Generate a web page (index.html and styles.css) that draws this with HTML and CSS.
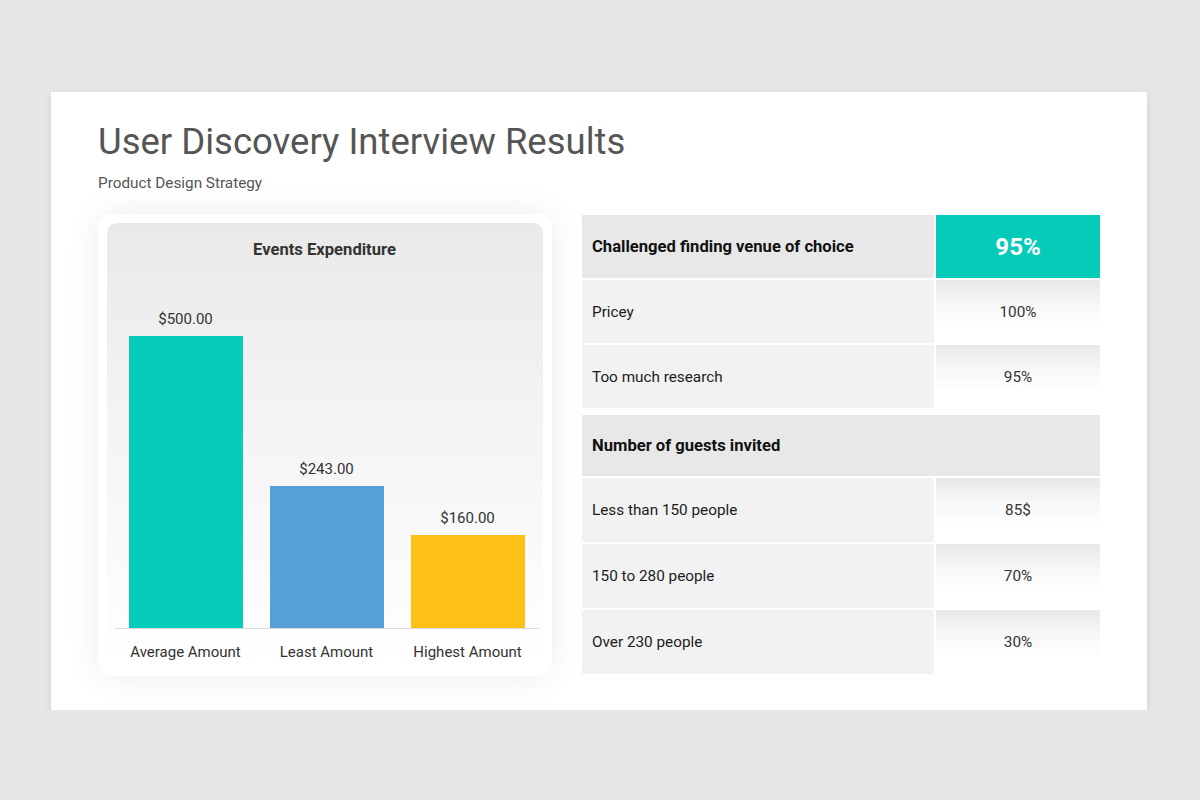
FILE: index.html
```html
<!DOCTYPE html>
<html lang="en">
<head>
<meta charset="utf-8">
<title>User Discovery Interview Results</title>
<link rel="stylesheet" href="styles.css">
</head>
<body>
<div class="slide">
  <h1 class="title">User Discovery Interview Results</h1>
  <p class="subtitle">Product Design Strategy</p>
  <div class="content">
    <div class="card">
      <div class="panel">
        <div class="chart-title">Events Expenditure</div>
        <div class="plot">
          <div class="col">
            <div class="val">$500.00</div>
            <div class="bar teal" style="height:292px"></div>
          </div>
          <div class="col">
            <div class="val">$243.00</div>
            <div class="bar blue" style="height:142px"></div>
          </div>
          <div class="col">
            <div class="val">$160.00</div>
            <div class="bar yellow" style="height:93px"></div>
          </div>
        </div>
        <div class="cats">
          <div class="cat">Average Amount</div>
          <div class="cat">Least Amount</div>
          <div class="cat">Highest Amount</div>
        </div>
      </div>
    </div>
    <div class="table">
      <div class="group">
        <div class="row">
          <div class="cell head">Challenged finding venue of choice</div>
          <div class="cell big">95%</div>
        </div>
        <div class="row">
          <div class="cell label">Pricey</div>
          <div class="cell num">100%</div>
        </div>
        <div class="row">
          <div class="cell label">Too much research</div>
          <div class="cell num">95%</div>
        </div>
      </div>
      <div class="group lower">
        <div class="row short">
          <div class="cell head full">Number of guests invited</div>
        </div>
        <div class="row">
          <div class="cell label">Less than 150 people</div>
          <div class="cell num">85$</div>
        </div>
        <div class="row">
          <div class="cell label">150 to 280 people</div>
          <div class="cell num">70%</div>
        </div>
        <div class="row">
          <div class="cell label">Over 230 people</div>
          <div class="cell num">30%</div>
        </div>
      </div>
    </div>
  </div>
</div>
</body>
</html>
```
FILE: styles.css
```css
* { box-sizing: border-box; }
html, body {
  margin: 0;
  padding: 0;
  background: #e8e6e7;
  font-family: Roboto, "Liberation Sans", Arial, sans-serif;
}
.slide {
  margin: 92px 0 0 51px;
  width: 1096px;
  height: 618px;
  background: #ffffff;
  box-shadow: 0 2px 8px rgba(0, 0, 0, 0.10);
  padding: 28px 47px 0 47px;
}
.title {
  margin: 0;
  font-size: 36.5px;
  line-height: 44px;
  font-weight: 400;
  color: #555555;
}
.subtitle {
  margin: 10px 0 0 0;
  font-size: 15.3px;
  line-height: 18px;
  color: #555555;
}
.content {
  display: flex;
  gap: 30px;
  margin-top: 22px;
}
.card {
  width: 454px;
  padding: 9px;
  border-radius: 14px;
  background: #ffffff;
  box-shadow: 0 0 34px rgba(0, 0, 0, 0.08);
}
.panel {
  border-radius: 10px;
  background: linear-gradient(to bottom, #e9e9e9 0%, #f4f4f4 45%, #fbfbfb 80%, #ffffff 100%);
  padding: 17px 4px 6px 8px;
}
.chart-title {
  text-align: center;
  font-size: 16.6px;
  line-height: 20px;
  font-weight: 700;
  color: #333333;
  padding-right: 5px;
}
.plot {
  display: flex;
  height: 369px;
  border-bottom: 1px solid #dcdcdc;
}
.col {
  width: 141px;
  display: flex;
  flex-direction: column;
  justify-content: flex-end;
  align-items: center;
}
.val {
  font-size: 15px;
  line-height: 18px;
  color: #333333;
  margin-bottom: 8px;
}
.bar { width: 114px; }
.teal { background: #05cdb9; }
.blue { background: #55a0d8; }
.yellow { background: #fdc116; }
.cats {
  display: flex;
  margin-top: 14px;
}
.cat {
  width: 141px;
  text-align: center;
  font-size: 15px;
  line-height: 18px;
  color: #333333;
}
.table {
  width: 518px;
  display: flex;
  flex-direction: column;
  gap: 7px;
  margin-top: 1px;
}
.group {
  display: flex;
  flex-direction: column;
  gap: 2px;
}
.row {
  display: flex;
  gap: 2px;
  height: 63px;
}
.lower .row { height: 64px; }
.lower .row.short { height: 61px; }
.cell {
  display: flex;
  align-items: center;
}
.head {
  width: 352px;
  background: #e8e8e8;
  padding-left: 10px;
  font-size: 16.6px;
  font-weight: 700;
  color: #111111;
}
.head.full { width: 518px; }
.big {
  width: 164px;
  background: #05cbb8;
  justify-content: center;
  font-size: 24px;
  font-weight: 700;
  color: #ffffff;
}
.label {
  width: 352px;
  background: #f2f2f2;
  padding-left: 10px;
  font-size: 15.3px;
  color: #1c1c1c;
}
.num {
  width: 164px;
  justify-content: center;
  background: linear-gradient(to bottom, #e8e8e8 0%, #f6f6f6 35%, #ffffff 75%);
  font-size: 15.3px;
  color: #333333;
}
```
